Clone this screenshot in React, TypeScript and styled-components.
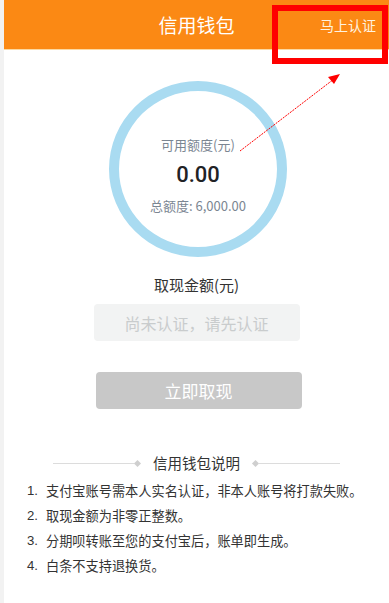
import styled, { createGlobalStyle } from 'styled-components';

const GlobalStyle = createGlobalStyle`
  html, body {
    margin: 0;
    padding: 0;
    background: #f2f2f2;
  }
  * {
    box-sizing: border-box;
  }
  body {
    font-family: "Noto Sans CJK SC", "Liberation Sans", sans-serif;
  }
`;

const notes = [
  '支付宝账号需本人实名认证，非本人账号将打款失败。',
  '取现金额为非零正整数。',
  '分期呗转账至您的支付宝后，账单即生成。',
  '白条不支持退换货。',
];

export default function App() {
  return (
    <>
      <GlobalStyle />
      <Page>
        <Header>
          <span />
          <Title>信用钱包</Title>
          <HeaderAction>马上认证</HeaderAction>
        </Header>

        <Ring>
          <RingLabel>可用额度(元)</RingLabel>
          <Amount>0.00</Amount>
          <RingLabel>总额度: 6,000.00</RingLabel>
        </Ring>

        <WithdrawLabel>取现金额(元)</WithdrawLabel>
        <AmountInput placeholder="尚未认证，请先认证" disabled />
        <SubmitButton disabled>立即取现</SubmitButton>

        <Divider>
          <Line />
          <Dot />
          <DividerText>信用钱包说明</DividerText>
          <Dot />
          <Line />
        </Divider>

        <NoteList>
          {notes.map((n, i) => (
            <NoteItem key={i}>
              <NoteNum>{i + 1}.</NoteNum>
              <span>{n}</span>
            </NoteItem>
          ))}
        </NoteList>

        {/* 标注：红框 + 箭头 */}
        <Markup width="385" height="603" viewBox="0 0 385 603">
          <rect x="271" y="8" width="110" height="53" fill="none" stroke="#ff0000" strokeWidth="6" />
          <line x1="236" y1="151" x2="330" y2="79" stroke="#ff0000" strokeWidth="1" strokeDasharray="2 1" />
          <polygon points="336,74 324,77 330,84" fill="#ff0000" />
        </Markup>
      </Page>
    </>
  );
}

const Page = styled.div`
  position: relative;
  margin-left: 4px;
  width: 385px;
  min-height: 603px;
  background: #fff;
  display: flex;
  flex-direction: column;
  align-items: center;
`;

const Header = styled.div`
  width: 100%;
  height: 50px;
  display: grid;
  grid-template-columns: 1fr auto 1fr;
  align-items: center;
  background: #fb8914;
  border-bottom: 1px solid #fcd9a2;
`;

const Title = styled.h1`
  margin: 0;
  font-size: 19px;
  font-weight: 400;
  color: #fff;
`;

const HeaderAction = styled.span`
  justify-self: end;
  padding-right: 13px;
  font-size: 14px;
  color: #fff3e0;
`;

const Ring = styled.div`
  width: 178px;
  height: 176px;
  margin-top: 31px;
  margin-left: 3px;
  border: 10px solid #a9dbf1;
  border-radius: 50%;
  display: flex;
  flex-direction: column;
  align-items: center;
  justify-content: center;
  padding-top: 12px;
`;

const RingLabel = styled.div`
  font-size: 13px;
  color: #7b8692;
  line-height: 18px;
`;

const Amount = styled.div`
  font-family: Roboto, "Liberation Sans", sans-serif;
  font-size: 22px;
  font-weight: 500;
  color: #1f2326;
  line-height: 28px;
  margin: 7px 0 8px;
`;

const WithdrawLabel = styled.div`
  margin-top: 17px;
  font-size: 15px;
  color: #333;
  line-height: 22px;
`;

const AmountInput = styled.input`
  margin-top: 8px;
  width: 206px;
  height: 37px;
  border: none;
  border-radius: 4px;
  background: #f2f3f3;
  text-align: center;
  font-family: inherit;
  font-size: 16px;

  &::placeholder {
    color: #c9cccd;
  }
`;

const SubmitButton = styled.button`
  margin-top: 31px;
  margin-left: 4px;
  width: 206px;
  height: 37px;
  border: none;
  border-radius: 4px;
  background: #c8c8c8;
  color: #fff;
  font-family: inherit;
  font-size: 17px;
`;

const Divider = styled.div`
  margin-top: 44px;
  display: flex;
  align-items: center;
`;

const Line = styled.div`
  width: 81px;
  height: 1px;
  background: #dcdcdc;
`;

const Dot = styled.div`
  width: 5px;
  height: 5px;
  background: #cfcfcf;
  transform: rotate(45deg);
  margin: 0 1px;
`;

const DividerText = styled.div`
  padding: 0 12px;
  font-size: 14.5px;
  color: #333;
  line-height: 20px;
`;

const NoteList = styled.ol`
  list-style: none;
  margin: 5px 0 0;
  padding: 0 0 0 23px;
  align-self: stretch;
`;

const NoteItem = styled.li`
  display: flex;
  font-size: 13.2px;
  line-height: 25px;
  color: #333;
`;

const NoteNum = styled.span`
  width: 19px;
  font-family: "Liberation Sans", sans-serif;
`;

const Markup = styled.svg`
  position: absolute;
  left: 0;
  top: 0;
  pointer-events: none;
`;
